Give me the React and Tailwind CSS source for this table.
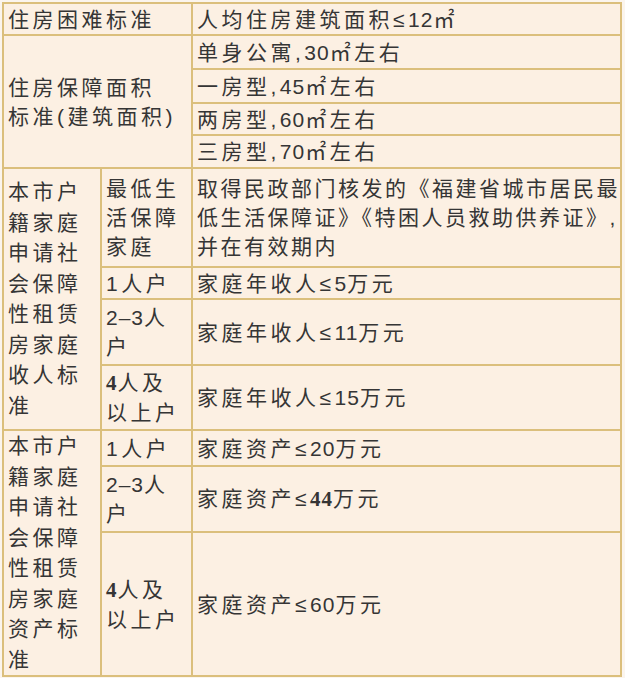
function N({ children, bold }) {
  // digits sit tighter than the CJK text around them
  return (
    <span
      className={
        bold
          ? "font-['Liberation_Serif'] font-bold tracking-[1px]"
          : "tracking-[1px]"
      }
    >
      {children}
    </span>
  );
}

export default function App() {
  const cell =
    "border-2 border-[#dbbf7c] bg-[#fcf0e3] px-[4px] py-0 align-middle whitespace-nowrap leading-[29px]";
  const tall = cell + " leading-[30.5px]";

  return (
    <div className="min-h-screen bg-[#fbf5ee] pl-[2px] pt-[2px] font-['Liberation_Sans','Noto_Sans_CJK_SC',sans-serif] text-[21px] tracking-[3.5px] text-[#353535]">
      <table className="table-fixed border-collapse w-[620px]">
        <colgroup>
          <col className="w-[98px]" />
          <col className="w-[91px]" />
          <col />
        </colgroup>
        <tbody>
          {/* 住房困难 */}
          <tr className="h-[32px]">
            <td colSpan={2} className={cell}>住房困难标准</td>
            <td className={cell}>
              人均住房建筑面积≤<N>12</N>㎡
            </td>
          </tr>

          {/* 保障面积 */}
          <tr className="h-[34px]">
            <td colSpan={2} rowSpan={4} className={cell}>
              住房保障面积
              <br />
              标准(建筑面积)
            </td>
            <td className={cell}>
              单身公寓,<N>30</N>㎡左右
            </td>
          </tr>
          <tr className="h-[34px]">
            <td className={cell}>
              一房型,<N>45</N>㎡左右
            </td>
          </tr>
          <tr className="h-[32px]">
            <td className={cell}>
              两房型,<N>60</N>㎡左右
            </td>
          </tr>
          <tr className="h-[33px]">
            <td className={cell}>
              三房型,<N>70</N>㎡左右
            </td>
          </tr>

          {/* 收入标准 */}
          <tr className="h-[99px]">
            <td rowSpan={4} className={tall}>
              本市户<br />籍家庭<br />申请社<br />会保障<br />性租赁<br />房家庭<br />收人标<br />准
            </td>
            <td className={cell}>
              最低生<br />活保障<br />家庭
            </td>
            <td className={cell + " tracking-[2.5px]"}>
              取得民政部门核发的《福建省城市居民最
              <br />
              低生活保障证》《特困人员救助供养证》,
              <br />
              并在有效期内
            </td>
          </tr>
          <tr className="h-[32px]">
            <td className={cell}>1人户</td>
            <td className={cell}>
              家庭年收人≤<N>5</N>万元
            </td>
          </tr>
          <tr className="h-[66px]">
            <td className={cell}>
              <N>2–3</N>人<br />户
            </td>
            <td className={cell}>
              家庭年收人≤<N>11</N>万元
            </td>
          </tr>
          <tr className="h-[65px]">
            <td className={cell}>
              <N bold>4</N>人及<br />以上户
            </td>
            <td className={cell}>
              家庭年收人≤<N>15</N>万元
            </td>
          </tr>

          {/* 资产标准 */}
          <tr className="h-[36px]">
            <td rowSpan={3} className={tall}>
              本市户<br />籍家庭<br />申请社<br />会保障<br />性租赁<br />房家庭<br />资产标<br />准
            </td>
            <td className={cell}>1人户</td>
            <td className={cell}>
              家庭资产≤<N>20</N>万元
            </td>
          </tr>
          <tr className="h-[65px]">
            <td className={cell}>
              <N>2–3</N>人<br />户
            </td>
            <td className={cell}>
              家庭资产≤<N bold>44</N>万元
            </td>
          </tr>
          <tr className="h-[142px]">
            <td className={cell}>
              <N bold>4</N>人及<br />以上户
            </td>
            <td className={cell}>
              家庭资产≤<N>60</N>万元
            </td>
          </tr>
        </tbody>
      </table>
    </div>
  );
}
